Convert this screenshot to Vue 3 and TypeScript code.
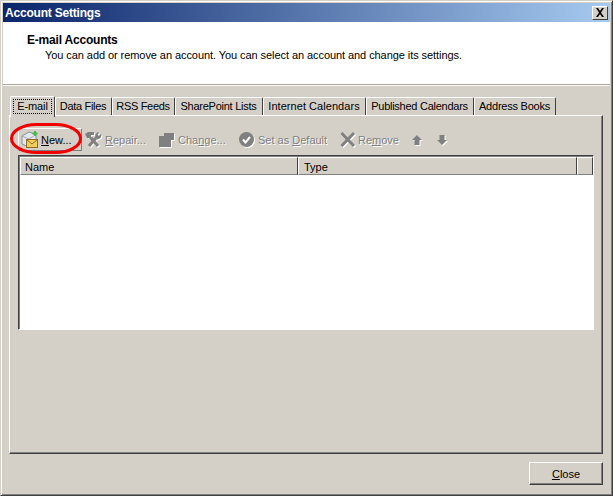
<script setup lang="ts">
interface Tab { label: string; width: number; spacing: number }
const tabs: Tab[] = [
  { label: 'E-mail', width: 45, spacing: -0.1 },
  { label: 'Data Files', width: 57, spacing: -0.3 },
  { label: 'RSS Feeds', width: 63, spacing: -0.33 },
  { label: 'SharePoint Lists', width: 88, spacing: -0.25 },
  { label: 'Internet Calendars', width: 103, spacing: 0.05 },
  { label: 'Published Calendars', width: 108, spacing: -0.26 },
  { label: 'Address Books', width: 82, spacing: -0.23 },
]
</script>

<template>
  <div class="window">
    <div class="titlebar">
      <span class="title">Account Settings</span>
      <button class="close-x" aria-label="Close">
        <svg width="10" height="9" viewBox="0 0 10 9"><path d="M1 0h2l2 3 2-3h2L6 4.500 9 9H7L5 6 3 9H1L4 4.500z" fill="#000"/></svg>
      </button>
    </div>
    <header class="head">
      <h1>E-mail Accounts</h1>
      <p>You can add or remove an account. You can select an account and change its settings.</p>
    </header>
    <main class="body">
      <div class="tabs">
        <div
          v-for="(t, i) in tabs"
          :key="t.label"
          class="tab"
          :class="{ active: i === 0 }"
          :style="{ width: t.width + 'px', letterSpacing: t.spacing + 'px' }"
        >
          <span :class="{ focus: i === 0 }">{{ t.label }}</span>
        </div>
      </div>
      <section class="panel">
        <div class="toolbar">
          <button class="tool new">
            <svg class="ico" width="17" height="17" viewBox="0 0 17 17">
              <path d="M1 5 8 1l7 2.500v8L8 16l-7-3z" fill="#e4e8ee" stroke="#87919e"/>
              <path d="M1 5l7 3 7-4.500" fill="none" stroke="#a2acb8"/>
              <path d="M8 8v8" stroke="#a2acb8"/>
              <path d="M13 0h2v1.500h1.500v2H15V5h-2V3.500h-1.500v-2H13z" fill="#46b946"/>
              <rect x="5.500" y="8.500" width="11" height="8" fill="#f3cd5a" stroke="#8f6d22"/>
              <path d="M6 9l5 4 5-4" fill="none" stroke="#8f6d22"/>
            </svg>
            <span><u>N</u>ew...</span>
          </button>
          <div class="tool off repair">
            <svg class="ico" width="17" height="15" viewBox="0 0 17 15">
              <path d="M0 2 3 0h6v3H6v1.500L9 7 7 9 4 6 2 6z" fill="#808080"/>
              <path d="M4 14l7-8M13 14 6 6" stroke="#808080" stroke-width="3" fill="none"/>
              <path d="M10 5.500 10.500 2 13 0l1 .5L12.500 3l1.500 1L16 2l.5 1-1 3-3 1.500z" fill="#808080"/>
            </svg>
            <span><u>R</u>epair...</span>
          </div>
          <div class="tool off change">
            <svg class="ico" width="15" height="14" viewBox="0 0 15 14">
              <path d="M0 3h5V0h10v7h-3v7H0z" fill="#808080"/>
            </svg>
            <span>Cha<u>n</u>ge...</span>
          </div>
          <div class="tool off setdef">
            <svg class="ico" width="16" height="15" viewBox="0 0 16 15">
              <circle cx="7.500" cy="7.500" r="7.500" fill="#808080"/>
              <path d="M4 7.500l2.500 3L11 5" fill="none" stroke="#fff" stroke-width="2"/>
            </svg>
            <span>Set as <u>D</u>efault</span>
          </div>
          <div class="tool off remove">
            <svg class="ico" width="16" height="15" viewBox="0 0 16 15">
              <path d="M1.500 1 14 14M14 1 1.500 14" stroke="#808080" stroke-width="3" fill="none"/>
            </svg>
            <span>Re<u>m</u>ove</span>
          </div>
          <svg class="arrow up" width="10" height="10" viewBox="0 0 10 10"><path d="M5 0l5 5H7.500v5h-5V5H0z" fill="#808080"/></svg>
          <svg class="arrow" width="10" height="10" viewBox="0 0 10 10"><path d="M2.500 0h5v5H10l-5 5-5-5h2.500z" fill="#808080"/></svg>
        </div>
        <div class="list">
          <div class="cols">
            <div class="col name">Name</div>
            <div class="col type">Type</div>
            <div class="col rest"></div>
          </div>
        </div>
      </section>
      <footer class="foot">
        <button class="btn"><span><u>C</u>lose</span></button>
      </footer>
      <svg class="ring" width="72" height="31" viewBox="0 0 72 31"><rect x="1.500" y="1.500" width="69" height="28" rx="25" ry="14" fill="none" stroke="#f00000" stroke-width="3"/></svg>
    </main>
  </div>
</template>

<style>
html, body { margin: 0; background: #d4d0c8; }
</style>

<style scoped>
* { box-sizing: border-box; }
.window {
  position: relative;
  width: 613px;
  height: 496px;
  padding: 2px 2px 1px 2px;
  display: flex;
  flex-direction: column;
  background: #d4d0c8;
  border: 1px solid #d4d0c8;
  border-right-color: #404040;
  border-bottom-color: #404040;
  box-shadow: inset 1px 1px 0 #fff, inset -1px -1px 0 #808080;
  font: 11px "Liberation Sans", Arial, sans-serif;
  color: #000;
}
.titlebar {
  height: 19px;
  flex: none;
  display: flex;
  align-items: center;
  justify-content: space-between;
  padding: 0 2px;
  background: linear-gradient(90deg, #0a246a, #a6caf0);
}
.title { color: #fff; font-weight: 700; font-size: 12px; letter-spacing: -0.2px; }
.close-x {
  width: 16px; height: 14px; padding: 0;
  display: flex; align-items: center; justify-content: center;
  background: #d4d0c8; border: 1px solid; border-color: #fff #404040 #404040 #fff;
}
.head {
  height: 63px;
  flex: none;
  background: #fff;
  border-bottom: 1px solid #aca899;
  padding: 11px 0 0 24px;
}
.head h1 { margin: 0; font-size: 12px; line-height: 15px; font-weight: 700; letter-spacing: -0.2px; }
.head p { margin: 0 0 0 18px; font-size: 11px; line-height: 15px; letter-spacing: -0.07px; }
.body {
  position: relative;
  flex: 1;
  border-top: 1px solid #fff;
  padding: 10px 7px 0 6px;
  display: flex;
  flex-direction: column;
}
.tabs { display: flex; height: 19px; padding-left: 1px; align-items: flex-end; position: relative; z-index: 1; }
.tab {
  flex: none;
  height: 18px;
  padding: 1px 1px 0 0;
  text-align: center;
  border-left: 1px solid #fff;
  border-top: 1px solid #fff;
  border-right: 1px solid #404040;
  border-radius: 2px 2px 0 0;
  white-space: nowrap;
  line-height: 15px;
}
.tab.active { height: 21px; margin-bottom: -2px; padding: 2px 2px 0; background: #d4d0c8; }
.focus { display: block; outline: 1px dotted #000; outline-offset: -1px; line-height: 15px; }
.panel {
  height: 339px;
  flex: none;
  padding: 12px 8px 0 8px;
  border: 1px solid;
  border-color: #fff #404040 #404040 #fff;
  box-shadow: inset -1px -1px 0 #808080;
}
.toolbar { display: flex; align-items: center; height: 23px; margin-bottom: 4px; }
.tool { flex: none; display: flex; align-items: center; gap: 3px; height: 23px; font: inherit; white-space: nowrap; }
.new {
  width: 64px; padding: 0 0 0 2px;
  background: transparent;
  border: 1px solid; border-color: #fff #808080 #808080 #fff;
}
.off { color: #808080; text-shadow: 1px 1px 0 #fff; }
.off .ico { filter: drop-shadow(1px 1px 0 #fff); }
.repair { margin-left: 3px; width: 74px; }
.change { width: 80px; gap: 4px; }
.setdef { width: 101px; }
.remove { width: 71px; gap: 2px; }
.arrow { flex: none; margin: 0 14px 0 1px; filter: drop-shadow(1px 1px 0 #fff); }
.list {
  height: 175px;
  background: #fff;
  border: 1px solid;
  border-color: #404040 #fff #fff #404040;
  box-shadow: inset 1px 1px 0 #808080;
  padding: 1px 0 0 1px;
}
.cols { display: flex; height: 18px; background: #d4d0c8; }
.col { height: 18px; padding-top: 1px; line-height: 16px; border: 1px solid; border-color: #fff #404040 #808080 #fff; }
.name { width: 278px; padding-left: 4px; }
.type { width: 279px; padding-left: 5px; }
.rest { flex: 1; }
.foot { flex: 1; display: flex; justify-content: flex-end; padding: 8px 0 0; }
.btn {
  width: 74px; height: 23px; padding: 0;
  font: inherit; color: #000; background: #d4d0c8;
  border: 1px solid; border-color: #fff #404040 #404040 #fff;
  box-shadow: inset -1px -1px 0 #808080;
}
.ring { position: absolute; left: 7px; top: 37px; }
</style>
